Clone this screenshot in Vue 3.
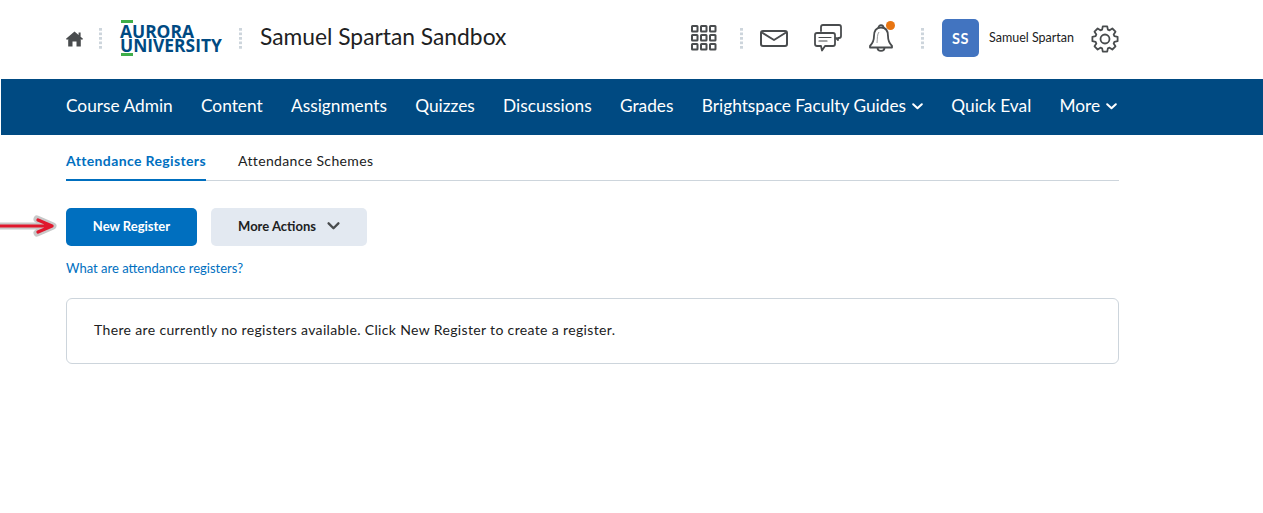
<template>
  <div class="page">
    <header class="topbar">
      <svg class="home" width="17" height="16" viewBox="0 0 17 16">
        <path d="M8.5 0.5 L12.6 4 V1.5 H14.6 V5.7 L17 7.8 L16 9 L14.8 8 V15.5 H10.5 V10.5 H6.5 V15.5 H2.2 V8 L1 9 L0 7.8 Z" fill="#494c4e" />
      </svg>
      <span class="dots home-dots"></span>
      <div class="logo">
        <span class="logo-bar"></span>
        <div class="logo-word">AURORA<br />UNIVERSITY</div>
        <span class="logo-bar"></span>
      </div>
      <span class="dots title-dots"></span>
      <div class="course-title">Samuel Spartan Sandbox</div>

      <div class="tools">
        <svg class="grid-ic" width="26" height="26" viewBox="0 0 26 26" fill="none" stroke="#494c4e" stroke-width="2">
          <template v-for="y in [1, 10, 19]" :key="y">
            <rect v-for="x in [1, 10, 19]" :key="x" :x="x" :y="y" width="5.5" height="5.5" rx="0.5" />
          </template>
        </svg>
        <span class="dots tool-dots"></span>
        <svg class="mail-ic" width="28" height="17" viewBox="0 0 28 17" fill="none" stroke="#494c4e" stroke-width="2" stroke-linejoin="round">
          <rect x="1" y="1" width="26" height="15" rx="2" />
          <path d="M2 2.5 L14 10 L26 2.5" />
        </svg>
        <svg class="chat-ic" width="28" height="28" viewBox="0 0 28 28" fill="none" stroke="#494c4e" stroke-width="1.8" stroke-linejoin="round" stroke-linecap="round">
          <path d="M7 7 V3 Q7 1 9 1 H25 Q27 1 27 3 V12 Q27 14 25 14 H24 L24 16 L22 14" />
          <path d="M3 9 H19 Q21 9 21 11 V20 Q21 22 19 22 H11 L8 26.5 L7 22 H3 Q1 22 1 20 V11 Q1 9 3 9 Z" fill="#fff" />
          <path d="M5 13.5 H17 M5 17 H13" stroke-width="1.2" />
        </svg>
        <div class="bell-wrap">
          <svg width="26" height="28" viewBox="0 0 26 28" fill="none" stroke="#494c4e" stroke-width="1.8" stroke-linejoin="round">
            <path d="M13 3.5 C8 3.5 6 7 6 12 C6 17 4.5 19.5 2 22 V23.5 H24 V22 C21.500 19.5 20 17 20 12 C20 7 18 3.5 13 3.5 Z" />
            <path d="M10.500 3.800 C10.500 0.300 15.500 0.300 15.500 3.800" />
            <path d="M9.500 23.800 C9.500 28 16.500 28 16.500 23.800" />
            <path d="M9 19 C9.500 15 9 10 11 8" stroke-width="1" stroke="#9a9c9e" />
          </svg>
          <span class="badge"></span>
        </div>
        <span class="dots user-dots"></span>
        <div class="avatar">SS</div>
        <div class="user-name">Samuel Spartan</div>
        <svg class="gear" width="28" height="28" viewBox="0 0 28 28" fill="none" stroke="#494c4e" stroke-width="1.8" stroke-linejoin="round">
          <circle cx="14" cy="14" r="4.500" />
          <path :d="gearPath" />
        </svg>
      </div>
    </header>

    <nav class="navbar">
      <a v-for="item in navItems" :key="item.label" class="nav-item">
        {{ item.label }}
        <svg v-if="item.caret" class="caret" width="11" height="7" viewBox="0 0 11 7" fill="none" stroke="#fff" stroke-width="2" stroke-linecap="round" stroke-linejoin="round">
          <path d="M1.200 1.200 L5.500 5.300 L9.800 1.200" />
        </svg>
      </a>
    </nav>

    <main class="content">
      <div class="tabs">
        <a class="tab active">Attendance Registers</a>
        <a class="tab">Attendance Schemes</a>
      </div>

      <div class="actions">
        <button class="btn primary">New Register</button>
        <button class="btn secondary">
          More Actions
          <svg width="13" height="8" viewBox="0 0 14 9" fill="none" stroke="#494c4e" stroke-width="2.600" stroke-linecap="round" stroke-linejoin="round">
            <path d="M1.500 1.500 L7 7 L12.500 1.500" />
          </svg>
        </button>
      </div>

      <a class="help-link">What are attendance registers?</a>

      <div class="empty-box">There are currently no registers available. Click New Register to create a register.</div>
    </main>

    <!-- annotation arrow drawn over the screenshot -->
    <svg class="arrow" width="58" height="24" viewBox="0 0 58 24" fill="none" stroke-linecap="round" stroke-linejoin="round">
      <path d="M0 12 H52 M37 5 L53 12 L37 19" stroke="#c8c8c8" stroke-width="7" />
      <path d="M0 12 H51 M38 6 L52 12 L38 18" stroke="#e0182d" stroke-width="3.200" />
    </svg>
  </div>
</template>

<script setup>
const navItems = [
  { label: 'Course Admin' },
  { label: 'Content' },
  { label: 'Assignments' },
  { label: 'Quizzes' },
  { label: 'Discussions' },
  { label: 'Grades' },
  { label: 'Brightspace Faculty Guides', caret: true },
  { label: 'Quick Eval' },
  { label: 'More', caret: true },
]

// 8 teeth round the settings cog
const gearPoint = (deg, r) => {
  const a = (deg * Math.PI) / 180
  return `${(14 + r * Math.sin(a)).toFixed(2)} ${(14 - r * Math.cos(a)).toFixed(2)}`
}
const gearPath =
  'M' +
  [0, 45, 90, 135, 180, 225, 270, 315]
    .flatMap((a) => [
      gearPoint(a - 17, 9.8),
      gearPoint(a - 10, 12.8),
      gearPoint(a + 10, 12.8),
      gearPoint(a + 17, 9.8),
    ])
    .join(' L') +
  ' Z'
</script>

<style>
html, body {
  margin: 0;
  background: #fff;
}
</style>

<style scoped>
.page {
  position: relative;
  height: 513px;
  overflow: hidden;
  font-family: Lato, sans-serif;
  color: #202122;
  background: #fff;
}

.topbar {
  height: 79px;
  box-sizing: border-box;
  padding: 0 144px 0 66px;
  display: flex;
  align-items: center;
}
.home {
  flex: none;
  margin-top: -2px;
}
.dots {
  flex: none;
  width: 3px;
  height: 21px;
  background: radial-gradient(circle at 1.500px 1.500px, #cdd5dc 1.500px, transparent 1.600px) 0 0 / 3px 4.500px repeat-y;
}
.home-dots {
  margin: -3px 18px 0 16px;
}
.title-dots {
  margin: -3px 18px 0 16px;
}
.logo {
  flex: none;
  width: 103px;
  margin-top: -3px;
  color: #004a82;
  font-family: "Open Sans", sans-serif;
  font-weight: 700;
  font-size: 17.400px;
}
.logo-word {
  height: 30px;
  padding-top: 1px;
  box-sizing: border-box;
  line-height: 14px;
  white-space: nowrap;
}
.logo-bar {
  display: block;
  width: 12px;
  height: 3px;
  background: #3fae49;
  margin-left: 1px;
}
.course-title {
  font-size: 22.800px;
  line-height: 30px;
  margin-top: -7px;
  white-space: nowrap;
}

.tools {
  margin-left: auto;
  display: flex;
  align-items: center;
  margin-top: -3px;
}
.tool-dots {
  margin: 0 17px 0 23px;
}
.chat-ic {
  margin-left: 26px;
}
.bell-wrap {
  position: relative;
  margin-left: 26px;
  height: 28px;
}
.badge {
  position: absolute;
  top: -3px;
  right: -1px;
  width: 9px;
  height: 9px;
  border-radius: 50%;
  background: #e87511;
}
.user-dots {
  margin: 0 18px 0 27px;
}
.avatar {
  width: 37px;
  height: 38px;
  border-radius: 5px;
  background: #4274c0;
  color: #fff;
  font-weight: 700;
  font-size: 14.500px;
  letter-spacing: 0.5px;
  display: flex;
  align-items: center;
  justify-content: center;
}
.user-name {
  margin: -2px 0 0 10px;
  font-size: 12.500px;
  white-space: nowrap;
}
.gear {
  margin-left: 17px;
  margin-top: 1px;
}

.navbar {
  height: 56px;
  box-sizing: border-box;
  margin-left: 1px;
  padding: 0 0 4px 65px;
  background: #004a82;
  display: flex;
  align-items: center;
  gap: 28.300px;
}
.nav-item {
  color: #fff;
  font-size: 17.300px;
  white-space: nowrap;
  display: flex;
  align-items: center;
  gap: 6px;
}
.caret {
  margin-top: 2px;
}

.content {
  width: 1053px;
  margin-left: 66px;
}
.tabs {
  height: 46px;
  box-sizing: border-box;
  border-bottom: 1px solid #cdd5dc;
  display: flex;
  gap: 32px;
}
.tab {
  height: 46px;
  box-sizing: border-box;
  padding-top: 17px;
  font-size: 14px;
  line-height: 18px;
  letter-spacing: 0.37px;
  white-space: nowrap;
}
.tab.active {
  color: #006fbf;
  font-weight: 700;
  border-bottom: 2px solid #006fbf;
}

.actions {
  margin-top: 27px;
  display: flex;
  gap: 14px;
}
.btn {
  height: 38px;
  border: none;
  border-radius: 5px;
  font-family: Lato, sans-serif;
  font-size: 13px;
  font-weight: 700;
  padding: 0 0 2px;
}
.btn.primary {
  width: 131px;
  background: #006fbf;
  color: #fff;
}
.btn.secondary {
  width: 156px;
  background: #e3e9f1;
  color: #202122;
  display: flex;
  align-items: center;
  justify-content: center;
  gap: 11px;
}
.help-link {
  display: block;
  margin-top: 13px;
  color: #006fbf;
  font-size: 13px;
  line-height: 18px;
}
.empty-box {
  margin-top: 21px;
  height: 66px;
  box-sizing: border-box;
  border: 1px solid #cdd5dc;
  border-radius: 6px;
  padding: 0 0 3px 27px;
  display: flex;
  align-items: center;
  font-size: 14px;
  letter-spacing: 0.35px;
}

.arrow {
  position: absolute;
  left: 0;
  top: 214px;
}
</style>
